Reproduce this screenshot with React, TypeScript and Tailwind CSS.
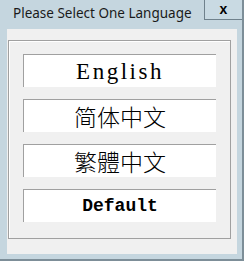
import React from "react";

const options = [
  { label: "English", cls: "font-['Liberation_Serif',serif] text-[23px] tracking-[2.5px] font-normal" },
  { label: "简体中文", cls: "font-['Noto_Sans_CJK_SC',sans-serif] text-[23px] font-light" },
  { label: "繁體中文", cls: "font-['Noto_Sans_CJK_TC',sans-serif] text-[23px] font-light" },
  { label: "Default", cls: "font-['Liberation_Mono',monospace] text-[18px] font-bold" },
];

export default function App() {
  return (
    <div className="w-[244px] h-[261px] bg-[#c5d6df] border-r-2 border-b-2 border-[#7d8e98] flex flex-col overflow-hidden">
      {/* title bar */}
      <div className="h-[29px] flex items-start shrink-0">
        <span className="pl-[13px] pt-[4px] text-[13.5px] leading-[18px] text-[#1a1a1a] font-['Noto_Sans',sans-serif] whitespace-nowrap">
          Please Select One Language
        </span>
        <div className="ml-auto mt-[-2px] w-[38px] h-[22px] border border-[#6f818c] border-r-0 bg-[#c9dae3] flex items-center justify-center">
          <span className="text-[14px] leading-none font-bold text-black font-['Liberation_Sans',sans-serif] pb-[1px]">x</span>
        </div>
      </div>

      {/* client area */}
      <div className="ml-[7px] w-[230px] h-[225px] bg-[#f0f0f0] pt-[11px]">
        <div className="ml-[1px] w-[223px] h-[199px] border border-[#a0a0a0] shadow-[inset_1px_1px_0_#ffffff] pt-[13px] pl-[14px] flex flex-col gap-[12px]">
          {options.map((o) => (
            <button
              key={o.label}
              className="w-[193px] h-[33px] bg-white border-t border-l border-[#a0a0a0] flex items-center justify-center text-black leading-none"
            >
              <span className={o.cls}>{o.label}</span>
            </button>
          ))}
        </div>
      </div>
    </div>
  );
}
